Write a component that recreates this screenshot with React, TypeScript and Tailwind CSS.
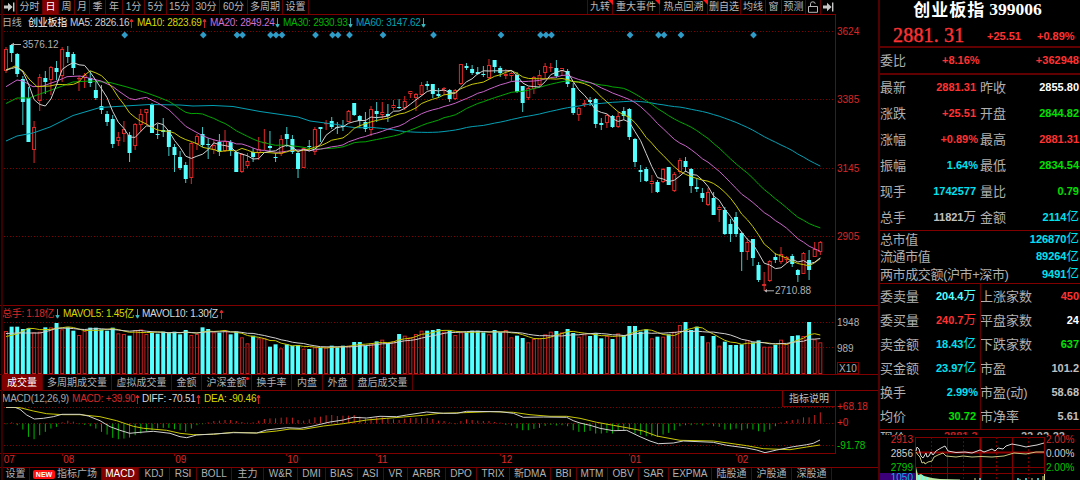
import clsx from "clsx";

type Point = [number, number];
// kind (r = up, c = down), high, body top, body bottom, low
type Candle = ["r" | "c", number, number, number, number];

const STEP = 5.616;
const candleX = (i: number) => 6 + i * STEP;

const candles: Candle[] = [
  ["r", 47, 49, 71, 73], ["c", 44, 45, 53, 62], ["c", 53, 54, 74, 77], ["c", 76, 79, 102, 125], ["c", 87, 98, 142, 142],
  ["r", 121, 127, 150, 163], ["r", 74, 77, 101, 111], ["c", 71, 78, 82, 94], ["r", 66, 67, 80, 95], ["c", 61, 68, 72, 80],
  ["r", 47, 49, 76, 82], ["c", 46, 52, 57, 63], ["c", 52, 54, 68, 75], ["r", 76, 78, 79, 91], ["r", 73, 75, 78, 88],
  ["c", 71, 78, 83, 87], ["c", 80, 90, 98, 100], ["c", 85, 106, 110, 114], ["c", 111, 114, 122, 126], ["c", 115, 119, 144, 148],
  ["r", 132, 137, 141, 146], ["r", 121, 129, 134, 142], ["c", 132, 135, 153, 162], ["r", 123, 124, 146, 150], ["r", 109, 114, 125, 132],
  ["r", 109, 109, 113, 125], ["c", 103, 105, 133, 133], ["c", 124, 134, 135, 139], ["c", 118, 130, 132, 137], ["c", 130, 130, 147, 156],
  ["c", 144, 147, 155, 172], ["c", 151, 157, 168, 170], ["c", 162, 165, 179, 183], ["r", 142, 143, 178, 184], ["r", 134, 136, 144, 150],
  ["c", 127, 134, 145, 147], ["c", 138, 144, 145, 159], ["r", 139, 145, 150, 154], ["c", 134, 142, 152, 156], ["r", 130, 141, 151, 152],
  ["c", 140, 142, 151, 156], ["c", 151, 152, 172, 172], ["r", 153, 154, 172, 173], ["r", 153, 161, 166, 168], ["c", 148, 152, 157, 162],
  ["r", 137, 149, 153, 160], ["r", 129, 142, 143, 150], ["c", 131, 146, 148, 152], ["c", 153, 157, 158, 162], ["r", 135, 139, 154, 156],
  ["c", 127, 134, 139, 147], ["c", 135, 139, 152, 154], ["c", 152, 153, 169, 178], ["r", 147, 148, 168, 168], ["c", 140, 146, 147, 150],
  ["r", 127, 129, 152, 155], ["c", 127, 127, 129, 142], ["r", 120, 123, 124, 130], ["c", 117, 121, 127, 129], ["c", 122, 127, 128, 134],
  ["c", 120, 126, 127, 131], ["r", 110, 111, 122, 122], ["c", 103, 103, 115, 116], ["c", 115, 116, 121, 128], ["c", 112, 122, 129, 132],
  ["r", 106, 109, 130, 136], ["c", 102, 111, 114, 122], ["r", 102, 112, 115, 119], ["c", 104, 114, 116, 122], ["r", 100, 105, 108, 110],
  ["c", 99, 107, 108, 109], ["r", 96, 101, 108, 110], ["r", 91, 91, 94, 98], ["r", 93, 94, 98, 111], ["r", 82, 85, 95, 96],
  ["c", 81, 84, 86, 90], ["c", 84, 84, 94, 98], ["c", 88, 94, 96, 98], ["r", 87, 88, 91, 95], ["c", 89, 90, 99, 102],
  ["r", 89, 90, 99, 100], ["r", 64, 64, 84, 85], ["c", 63, 66, 68, 70], ["c", 65, 69, 73, 75], ["c", 67, 72, 74, 75],
  ["c", 66, 74, 75, 77], ["r", 59, 65, 78, 79], ["c", 60, 60, 67, 73], ["c", 66, 68, 73, 77], ["r", 69, 74, 76, 79],
  ["r", 70, 73, 76, 81], ["c", 72, 75, 92, 93], ["c", 86, 86, 103, 112], ["r", 87, 88, 98, 100], ["r", 76, 77, 89, 94],
  ["r", 70, 75, 85, 87], ["r", 63, 66, 73, 79], ["r", 63, 67, 68, 72], ["c", 60, 68, 76, 78], ["r", 68, 68, 71, 76],
  ["c", 69, 71, 84, 87], ["c", 83, 88, 113, 115], ["r", 107, 108, 115, 121], ["r", 100, 103, 105, 107], ["c", 97, 100, 102, 106],
  ["c", 98, 99, 124, 128], ["c", 118, 123, 125, 130], ["r", 114, 115, 123, 128], ["c", 115, 116, 127, 128], ["r", 112, 116, 127, 128],
  ["c", 107, 111, 116, 120], ["c", 108, 109, 137, 140], ["c", 138, 139, 162, 167], ["c", 165, 170, 172, 182], ["c", 167, 169, 181, 182],
  ["r", 175, 181, 184, 193], ["c", 180, 182, 192, 193], ["r", 168, 169, 182, 183], ["c", 167, 167, 185, 185], ["r", 172, 174, 191, 192],
  ["r", 158, 160, 172, 174], ["c", 157, 161, 167, 172], ["c", 168, 169, 186, 193], ["c", 178, 187, 189, 192], ["c", 188, 193, 198, 202],
  ["r", 188, 192, 205, 206], ["c", 192, 198, 215, 215], ["r", 205, 207, 210, 222], ["c", 207, 210, 234, 235], ["c", 219, 224, 234, 242],
  ["c", 212, 217, 234, 237], ["c", 232, 233, 252, 271], ["r", 238, 242, 252, 260], ["c", 239, 239, 258, 266], ["c", 262, 265, 280, 282],
  ["r", 272, 284, 286, 291], ["r", 260, 261, 281, 282], ["c", 253, 257, 260, 263], ["r", 247, 254, 262, 264], ["r", 256, 257, 260, 263],
  ["c", 254, 256, 264, 267], ["c", 269, 270, 275, 282], ["r", 252, 253, 274, 274], ["c", 250, 260, 270, 280], ["r", 242, 249, 257, 257],
  ["r", 241, 242, 252, 255],
];

// bar tops, in thirds of a pixel below y = 300
const volumes = [
  93, 80, 80, 87, 85, 97, 95, 82, 82, 69, 88, 82, 92, 105, 93, 83, 83, 88, 92, 83, 100, 102, 107, 90, 88, 102, 98, 101, 95, 98,
  95, 103, 90, 105, 102, 82, 87, 97, 98, 92, 103, 95, 112, 130, 107, 115, 115, 140, 133, 145, 133, 137, 135, 146, 147, 142, 143, 142, 137, 142,
  137, 137, 126, 126, 137, 130, 124, 119, 130, 124, 102, 107, 112, 102, 92, 92, 90, 87, 95, 92, 105, 97, 97, 92, 92, 97, 103, 90, 97, 90,
  112, 107, 114, 127, 117, 115, 103, 95, 93, 97, 87, 99, 110, 103, 108, 100, 115, 108, 117, 100, 105, 78, 78, 95, 88, 115, 110, 110, 103, 95,
  75, 66, 90, 80, 108, 127, 108, 137, 125, 135, 135, 133, 120, 127, 121, 140, 140, 135, 119, 132, 108, 106, 108, 66, 118, 127,
];

// histogram ends, same unit, zero line at 370
const histogram = [
  371, 367, 375, 388, 410, 417, 405, 395, 385, 380, 367, 362, 365, 372, 374, 378, 385, 395, 403, 413, 417, 415, 412, 405, 400, 393, 390, 385, 383, 383,
  387, 390, 395, 385, 375, 371, 367, 363, 362, 360, 360, 363, 366, 368, 367, 362, 357, 355, 355, 353, 352, 353, 360, 362, 358, 352, 350, 346, 345, 348,
  347, 347, 345, 350, 355, 355, 352, 352, 355, 358, 360, 356, 354, 354, 354, 354, 357, 362, 363, 367, 372, 363, 358, 360, 362, 363, 363, 366, 368, 374,
  376, 384, 390, 390, 386, 383, 377, 374, 376, 375, 378, 390, 395, 395, 392, 400, 400, 398, 400, 390, 392, 388, 400, 404, 408, 408, 410, 403, 398, 390,
  378, 375, 375, 373, 376, 373, 378, 380, 388, 388, 385, 390, 385, 388, 393, 395, 388, 378, 367, 363, 360, 358, 352, 352, 345, 337,
];

const closes = candles.map(([kind, , top, bottom]) => (kind === "r" ? top : bottom));
const volumeTops = volumes.map((v) => 300 + v / 3);

// moving average; `head` covers the days before the window is full
function average(values: number[], size: number, head: Point[]): string {
  const points: Point[] = [...head];
  for (let i = size - 1; i < values.length; i++) {
    const sum = values.slice(i - size + 1, i + 1).reduce((a, b) => a + b, 0);
    points.push([candleX(i), sum / size]);
  }
  return toPoints(points);
}

function toPoints(points: Point[]): string {
  return points.map(([x, y]) => `${x.toFixed(1)},${y.toFixed(1)}`).join(" ");
}

const averages = [
  {
    color: "#00a0b4",
    points: average(closes, 60, [
      [6, 141], [17, 136], [33, 133], [50, 127], [73, 115.5], [100, 107.5], [133, 105.5], [150, 104.5], [180, 105],
      [193, 106], [213, 105.5], [233, 106.5], [260, 111.5], [298, 117], [310, 121], [333, 124],
    ]),
  },
  {
    color: "#00a800",
    points: average(closes, 30, [
      [6, 103.5], [17, 98], [29, 98], [40, 94], [57, 88], [73, 82], [90, 81], [110, 82.5], [127, 87], [147, 93], [158, 97],
    ]),
  },
  {
    color: "#c864c8",
    points: average(closes, 20, [
      [6, 86.7], [17, 80], [23, 81], [33, 86.7], [43, 86], [57, 81], [67, 76.7], [80, 76], [101, 81],
    ]),
  },
  {
    color: "#c8c800",
    points: average(closes, 10, [[6, 70], [11.6, 67.7], [15, 66], [23, 71], [29, 79], [37, 86.7], [50, 86]]),
  },
  { color: "#d0d0d0", points: average(closes, 5, [[6, 70], [11.6, 68.5], [17, 67], [23, 72]]) },
];

const diff: Point[] = [
  [6, 407.3], [15, 407.3], [20, 409.3], [26.7, 415], [34.3, 419], [43.3, 418.3], [53.3, 416.7], [62, 414.3], [80, 414.3],
  [88.3, 416], [100, 420.7], [110, 426.7], [120, 430.3], [129.7, 433.3], [140, 432.3], [153.3, 431.3], [170, 433.3],
  [180, 436.7], [186.7, 437.7], [196.7, 435], [213.3, 434], [233.3, 432.7], [256.7, 433], [266.7, 430], [286.7, 427.7],
  [300, 428.3], [310, 426.7], [330, 422], [343.3, 420], [353.3, 417.3], [366.7, 418], [380, 416.3], [396.7, 416.7],
  [406.7, 415], [426.7, 412], [443.3, 413.3], [456.7, 413.3], [466.7, 411.3], [500, 411.7], [513.3, 413.3], [523.3, 417.3],
  [543.3, 417], [566.7, 417.3], [573.3, 420.7], [580, 423], [590, 425.3], [600, 428.3], [613.3, 430.7], [626.7, 430.3],
  [640, 436.7], [650, 441], [658.3, 443.7], [673.3, 443], [683.3, 441], [713.3, 442.3], [726.7, 445.3], [746.7, 448],
  [756.7, 450], [765, 452.7], [776.7, 450], [793.3, 446.7], [806.7, 444.7], [813.3, 443.3], [820, 440],
];

const dea: Point[] = [
  [6, 407.3], [20, 407.7], [33.3, 411], [46.7, 413.7], [63.3, 414.7], [80, 414.7], [100, 416.7], [116.7, 420.7],
  [133.3, 426.3], [143.3, 428.3], [166.7, 430.3], [180, 433.3], [193.3, 434.7], [213.3, 434.3], [233.3, 432.3],
  [256.7, 433], [276.7, 431], [290, 429], [303.3, 429.3], [323.3, 426], [343.3, 423.7], [366.7, 420], [386.7, 418.3],
  [403.3, 417], [423.3, 415.3], [440, 413.3], [463.3, 412.7], [490, 411.7], [513.3, 412.3], [530, 414.7], [550, 416.3],
  [566.7, 416.3], [580, 418.3], [596.7, 422.3], [613.3, 425.3], [630, 428.3], [643.3, 431], [656.7, 436], [680, 440.3],
  [713.3, 441], [730, 443.3], [746.7, 445.7], [763.3, 448.7], [790, 449.7], [806.7, 447], [820, 445],
];

const signals = [124.7, 203.3, 237, 242.5, 270.5, 276, 282, 315.5, 332.5, 338, 349.5, 383, 433.5, 501, 540.5, 546, 551.5, 630, 658.5, 664, 681, 753.5];

const months = [
  { label: "07", x: 3 },
  { label: "08", x: 62.5 },
  { label: "09", x: 174.5 },
  { label: "10", x: 286.5 },
  { label: "11", x: 376.5 },
  { label: "12", x: 500.5 },
  { label: "01", x: 629.5 },
  { label: "02", x: 736.5 },
];

const periods = [
  { label: "分时", width: "w-[26px]" },
  { label: "日", width: "w-[16px]", active: true },
  { label: "周", width: "w-[16px]" },
  { label: "月", width: "w-[15px]" },
  { label: "季", width: "w-[16px]" },
  { label: "年", width: "w-[17px]" },
  { label: "1分", width: "w-[22px]" },
  { label: "5分", width: "w-[22px]" },
  { label: "15分", width: "w-[26px]" },
  { label: "30分", width: "w-[27px]" },
  { label: "60分", width: "w-[28px]" },
  { label: "多周期", width: "w-[35px]" },
  { label: "设置", width: "w-[26px]" },
];

const tools = [
  { label: "九转", width: "w-[25px]", hot: true },
  { label: "重大事件", width: "w-[47px]", hot: true },
  { label: "热点回溯", width: "w-[48px]", hot: true },
  { label: "删自选", width: "w-[33px]" },
  { label: "均线", width: "w-[25px]" },
  { label: "窗", width: "w-[16px]" },
  { label: "预测", width: "w-[24px]" },
];

const volumeTabs = [
  { label: "成交量", width: "w-[41px]", active: true },
  { label: "多周期成交量", width: "w-[69px]" },
  { label: "虚拟成交量", width: "w-[60px]" },
  { label: "金额", width: "w-[30px]" },
  { label: "沪深金额", width: "w-[50px]", dot: true },
  { label: "换手率", width: "w-[40px]" },
  { label: "内盘", width: "w-[31px]" },
  { label: "外盘", width: "w-[30px]" },
  { label: "盘后成交量", width: "w-[60px]" },
];

const indicatorTabs = [
  { label: "MACD", width: "w-[37px]", active: true },
  { label: "KDJ", width: "w-[31px]" },
  { label: "RSI", width: "w-[27px]" },
  { label: "BOLL", width: "w-[35px]" },
  { label: "主力", width: "w-[32px]" },
  { label: "W&R", width: "w-[34px]" },
  { label: "DMI", width: "w-[28px]" },
  { label: "BIAS", width: "w-[32px]" },
  { label: "ASI", width: "w-[26px]" },
  { label: "VR", width: "w-[24px]" },
  { label: "ARBR", width: "w-[38px]" },
  { label: "DPO", width: "w-[31px]" },
  { label: "TRIX", width: "w-[33px]" },
  { label: "新DMA", width: "w-[41px]" },
  { label: "BBI", width: "w-[26px]" },
  { label: "MTM", width: "w-[31px]" },
  { label: "OBV", width: "w-[31px]" },
  { label: "SAR", width: "w-[30px]" },
  { label: "EXPMA", width: "w-[43px]" },
  { label: "陆股通", width: "w-[40px]" },
  { label: "沪股通", width: "w-[40px]" },
  { label: "深股通", width: "w-[40px]" },
];

const RED = "text-[#ff3232]";
const GREEN = "text-[#00e000]";
const CYAN = "text-[#00e0f0]";
const WHITE = "text-white";
const GREY = "text-[#c0c0c0]";

type Cell = { label: string; value: string; unit?: string; color: string };

const quotes: [Cell, Cell][] = [
  [{ label: "最新", value: "2881.31", color: RED }, { label: "昨收", value: "2855.80", color: WHITE }],
  [{ label: "涨跌", value: "+25.51", color: RED }, { label: "开盘", value: "2844.82", color: GREEN }],
  [{ label: "涨幅", value: "+0.89%", color: RED }, { label: "最高", value: "2881.31", color: RED }],
  [{ label: "振幅", value: "1.64%", color: CYAN }, { label: "最低", value: "2834.54", color: GREEN }],
  [{ label: "现手", value: "1742577", color: CYAN }, { label: "量比", value: "0.79", color: GREEN }],
  [{ label: "总手", value: "11821", unit: "万", color: GREY }, { label: "金额", value: "2114", unit: "亿", color: CYAN }],
];

const totals: Cell[] = [
  { label: "总市值", value: "126870", unit: "亿", color: CYAN },
  { label: "流通市值", value: "89264", unit: "亿", color: CYAN },
  { label: "两市成交额(沪市+深市)", value: "9491", unit: "亿", color: CYAN },
];

const orders: [Cell, Cell][] = [
  [{ label: "委卖量", value: "204.4", unit: "万", color: "text-[#54ffff]" }, { label: "上涨家数", value: "450", color: RED }],
  [{ label: "委买量", value: "240.7", unit: "万", color: RED }, { label: "平盘家数", value: "24", color: WHITE }],
  [{ label: "卖金额", value: "18.43", unit: "亿", color: CYAN }, { label: "下跌家数", value: "637", color: GREEN }],
  [{ label: "买金额", value: "23.97", unit: "亿", color: CYAN }, { label: "市盈", value: "101.2", color: GREY }],
  [{ label: "换手", value: "2.99%", color: CYAN }, { label: "市盈(动)", value: "58.68", color: GREY }],
  [{ label: "均价", value: "30.72", color: GREEN }, { label: "市净率", value: "5.61", color: GREY }],
];

function Arrow({ down }: { down?: boolean }) {
  return (
    <svg width="5" height="10" viewBox="0 0 5 10" className="shrink-0">
      {down ? (
        <path d="M2.5 0V8M0.8 6.5L2.5 9.2L4.2 6.5Z" stroke="#3cb8c0" fill="#3cb8c0" strokeWidth="0.9" />
      ) : (
        <path d="M2.5 10V2M1 3.5L2.5 1L4 3.5Z" stroke="#d82828" fill="#d82828" strokeWidth="0.9" />
      )}
    </svg>
  );
}

function SkipIcon() {
  return (
    <svg width="11" height="10" viewBox="0 0 11 10">
      <path d="M0 3.5H4V0.8L8.6 5L4 9.2V6.5H0Z" fill="#c8c8c8" />
      <path d="M9.7 0.5V9.5" stroke="#c8c8c8" strokeWidth="1.4" />
    </svg>
  );
}

function Toolbar() {
  return (
    <div className="flex h-[15px] w-[836px] border-b border-[#800000] pl-[2px] text-[#b8b8b8]">
      <div className="flex w-[15px] items-center justify-center border-r border-[#600000]">
        <SkipIcon />
      </div>
      {periods.map((p) => (
        <div
          key={p.label}
          className={clsx(
            "flex items-center justify-center border-r border-[#600000]",
            p.width,
            p.active && "bg-[#800000] text-white",
          )}
        >
          {p.label}
        </div>
      ))}
      <div className="flex-1 border-r border-[#600000]" />
      {tools.map((t) => (
        <div key={t.label} className={clsx("relative flex items-center justify-center border-r border-[#600000]", t.width)}>
          {t.label}
          {t.hot && (
            <svg width="5" height="5" className="absolute -right-px top-0">
              <path d="M0 0H5V5Z" fill="#ff1414" />
            </svg>
          )}
        </div>
      ))}
      <div className="flex w-[15px] items-center justify-center border-r border-[#600000]">
        <svg width="10" height="12" viewBox="0 0 10 12" fill="none" stroke="#b8b8b8">
          <path d="M0.5 5.5H9.5V11.3H0.5ZM2.5 5.5V2.8Q2.5 0.8 4.8 0.8Q7.2 0.8 7.2 2.8" />
        </svg>
      </div>
      <div className="flex w-[15px] items-center justify-center">
        <SkipIcon />
      </div>
    </div>
  );
}

function GridLine({ y }: { y: number }) {
  return <line x1="4" x2="835" y1={y} y2={y} stroke="#800000" strokeDasharray="1 2" />;
}

function PriceChart() {
  return (
    <svg width="835" height="275" viewBox="0 30 835 275" className="block">
      {[31.5, 99.5, 168.5, 236.5].map((y) => (
        <GridLine key={y} y={y} />
      ))}
      {signals.map((x) => (
        <path key={x} d={`M${x} 31.6L${x + 3.4} 35L${x} 38.4L${x - 3.4} 35Z`} fill="#2f9cc8" />
      ))}
      {candles.map(([kind, high, top, bottom, low], i) => {
        const x = candleX(i);
        if (kind === "c") {
          return (
            <g key={i} fill="#54ffff">
              <rect x={x - 0.5} y={high} width="1" height={Math.max(low - high, 1)} opacity="0.8" />
              <rect x={x - 2} y={top} width="4" height={Math.max(bottom - top, 1)} />
            </g>
          );
        }
        return (
          <g key={i} stroke="#e02828" fill="none">
            <path d={`M${x} ${high}V${top}M${x} ${bottom}V${low}`} />
            <rect x={x - 1.5} y={top + 0.5} width="3" height={Math.max(bottom - top - 1, 0.2)} />
          </g>
        );
      })}
      {averages.map((a) => (
        <polyline key={a.color} points={a.points} fill="none" stroke={a.color} />
      ))}
      <g fill="#b0b0b0" stroke="none" fontSize="10">
        <path d="M12 44.5H21" stroke="#b0b0b0" />
        <path d="M11 44.5L14 42.8V46.2Z" />
        <text x="22.5" y="48">3576.12</text>
        <path d="M765 290.8H774" stroke="#b0b0b0" />
        <path d="M764 290.8L767 289V292.6Z" />
        <text x="775" y="294">2710.88</text>
      </g>
    </svg>
  );
}

function VolumeChart() {
  return (
    <svg width="835" height="54" viewBox="0 320 835 54" className="block">
      <GridLine y={322.5} />
      <GridLine y={347.5} />
      {volumeTops.map((y, i) => {
        const x = candleX(i);
        return candles[i][0] === "c" ? (
          <rect key={i} x={x - 2} y={y} width="4" height={374 - y} fill="#54ffff" />
        ) : (
          <rect key={i} x={x - 1.5} y={y + 0.5} width="3" height={373 - y} fill="none" stroke="#c82020" />
        );
      })}
      <polyline
        points={average(volumeTops, 5, [[6, 336.5], [17, 334]])}
        fill="none"
        stroke="#c8c800"
      />
      <polyline
        points={average(volumeTops, 10, [[6, 333.5], [17, 333], [40, 333], [50, 330.5]])}
        fill="none"
        stroke="#d0d0d0"
      />
    </svg>
  );
}

function MacdChart() {
  return (
    <svg width="835" height="46" viewBox="0 407 835 46" className="block">
      <GridLine y={407.5} />
      <GridLine y={423.5} />
      <GridLine y={445.5} />
      {histogram.map((v, i) => {
        const end = 300 + v / 3;
        const up = v < 370;
        return (
          <rect
            key={i}
            x={candleX(i) - 0.5}
            y={up ? end : 423.5}
            width="1"
            height={Math.max(Math.abs(end - 423.3), 0.7)}
            fill={up ? "#c82020" : "#00b400"}
          />
        );
      })}
      <polyline points={toPoints(dea)} fill="none" stroke="#c8c800" />
      <polyline points={toPoints(diff)} fill="none" stroke="#d0d0d0" />
    </svg>
  );
}

function MonthAxis() {
  return (
    <svg width="835" height="13" viewBox="0 454 835 13" className="block">
      {months.map((m) => (
        <g key={m.label}>
          <path d={`M${m.x} 454V456`} stroke="#800000" />
          <text x={m.x + 0.7} y="463.2" fontSize="10" fill="#d82828">
            {m.label}
          </text>
        </g>
      ))}
    </svg>
  );
}

function PriceSection() {
  return (
    <section className="flex h-[291px] border-b border-[#800000]">
      <div className="w-[836px] border-r border-[#800000]">
        <div className="flex h-[15px] items-center pl-[2px] pt-px tracking-[-0.25px]">
          <span className="w-[26px] text-[#b0b0b0]">日线</span>
          <span className="w-[42px] text-white">创业板指</span>
          <span className="flex w-[67px] items-center text-[#d0d0d0]">MA5: 2826.16<Arrow /></span>
          <span className="flex w-[73px] items-center text-[#d8d800]">MA10: 2823.69<Arrow /></span>
          <span className="flex w-[73px] items-center text-[#d070d0]">MA20: 2849.24<Arrow down /></span>
          <span className="flex w-[73px] items-center text-[#00b400]">MA30: 2930.93<Arrow down /></span>
          <span className="flex items-center text-[#00a0b4]">MA60: 3147.62<Arrow down /></span>
        </div>
        <PriceChart />
      </div>
      <div className="flex flex-col gap-[56.3px] pl-px pt-[11px] leading-3 text-[#d82828]">
        <span>3624</span>
        <span>3385</span>
        <span>3145</span>
        <span>2905</span>
      </div>
    </section>
  );
}

function VolumeSection() {
  return (
    <section className="flex h-[69px] border-b border-[#800000]">
      <div className="w-[836px] border-r border-[#800000]">
        <div className="flex h-[14px] items-center pl-[2px] pt-[2px] tracking-[-0.3px]">
          <span className="flex w-[61px] items-center gap-px text-[#d82828]">总手: 1.18亿<Arrow down /></span>
          <span className="flex w-[79px] items-center gap-px text-[#d8d800]">MAVOL5: 1.45亿<Arrow down /></span>
          <span className="flex items-center gap-px text-[#d8d8d8]">MAVOL10: 1.30亿<Arrow /></span>
        </div>
        <VolumeChart />
      </div>
      <div className="flex flex-col items-start pl-px pt-[11px] leading-3 text-[#b0b0b0]">
        <span>1948</span>
        <span className="mt-[14px]">989</span>
        <span className="mt-[7px] h-[12px] border border-[#800000] px-px leading-[11px]">X10</span>
      </div>
    </section>
  );
}

function MacdSection() {
  return (
    <section className="flex h-[63px]">
      <div className="w-[836px] border-b border-r border-[#800000]">
        <div className="flex h-[16px] items-center pl-[2px] tracking-[-0.2px]">
          <span className="w-[70px] text-[#a8a8a8]">MACD(12,26,9)</span>
          <span className="flex w-[70px] items-center text-[#d82828]">MACD: +39.90<Arrow /></span>
          <span className="flex w-[62px] items-center text-[#d8d8d8]">DIFF: -70.51<Arrow /></span>
          <span className="flex items-center text-[#d8d800]">DEA: -90.46<Arrow /></span>
          <span className="ml-auto flex h-[16px] w-[53px] items-center justify-center border-b border-l border-[#800000] tracking-normal text-[#c0c0c0]">
            指标说明
          </span>
        </div>
        <MacdChart />
      </div>
      <div className="flex flex-col pl-px pt-[10px] leading-3 text-[#d82828]">
        <span>+68.18</span>
        <span className="mt-[4px]">+0</span>
        <span className="mt-[11px] text-[#00c800]">-91.78</span>
      </div>
    </section>
  );
}

function IndicatorBar() {
  return (
    <div className="flex h-[13px] border-t border-[#800000] pl-[2px] text-[#b0b0b0]">
      <div className="flex w-[28px] items-center justify-center border-r border-[#600000]">设置</div>
      <div className="flex w-[72px] items-center justify-end gap-[2px] border-r border-[#600000] pr-[4px]">
        <span className="flex h-[9px] w-[22px] items-center justify-center rounded-[2px] bg-[#ff1010] text-[7px] font-bold text-white">
          NEW
        </span>
        指标广场
      </div>
      {indicatorTabs.map((t) => (
        <div
          key={t.label}
          className={clsx(
            "flex items-center justify-center border-r border-[#600000]",
            t.width,
            t.active && "bg-[#800000] text-white",
          )}
        >
          {t.label}
        </div>
      ))}
    </div>
  );
}

function Value({ cell }: { cell: Cell }) {
  return (
    <span className={clsx("flex items-center text-[11px] font-bold", cell.color)}>
      {cell.value}
      {cell.unit && <span className="text-[12.5px] font-normal">{cell.unit}</span>}
    </span>
  );
}

function Pair({ cells: [left, right] }: { cells: [Cell, Cell] }) {
  const percent = left.value.endsWith("%");
  return (
    <div className="flex flex-1 items-center">
      <div className={clsx("flex w-[100px] items-center justify-between", percent ? "pr-[2px]" : "pr-[4px]")}>
        <span>{left.label}</span>
        <Value cell={left} />
      </div>
      <div className="flex flex-1 items-center justify-between">
        <span>{right.label}</span>
        <Value cell={right} />
      </div>
    </div>
  );
}

function MiniChart() {
  return (
    <div className="flex h-[43px] text-[10px] leading-3">
      <div className="flex w-[35px] flex-col items-end">
        <span className="pr-[2px] leading-[5px] text-[#d82828]">2913</span>
        <span className="mt-[6px] pr-[2px] text-[#d0d0d0]">2856</span>
        <span className="mt-[2px] pr-[2px] leading-[11px] text-[#00c800]">2799</span>
        <span className="w-full bg-[#3c0078] pr-[2px] text-right leading-[10px] text-[#00b4e0]">1050</span>
      </div>
      <svg width="131" height="43" viewBox="915 437 131 43" className="block">
        <path d="M915.5 437V480M947.5 437V480M1012.5 437V480M1044.5 437V480M915 437.5H1045M915 467.5H1045M915 473.5H1045" stroke="#800000" fill="none" />
        <path d="M931.5 437V480M963.5 437V480M996.5 437V480M1028.5 437V480" stroke="#700000" strokeDasharray="2 2" />
        <path d="M980.5 437V480M915 452.5H1045" stroke="#900000" strokeWidth="2" />
        <path d="M916 480V467L918 475L921 474L924 476L928 477L932 478L940 479L960 479.5V480Z" fill="#b8e8a0" />
        <path d="M918 475V480M922 475V480M926 477V480M980 478V480M1018 478V480M1026 478V480M1038 478V480" stroke="#54ffff" strokeWidth="1.4" />
        <path d="M975 478V480M1020 479V480M1032 478V480M1043 476V480M1044.5 474V480" stroke="#d8d880" />
        <polyline
          points="916,452 918,455 920,457 922,463 924,462 925,464 928,462 932,461 934,457 938,455 943,453 946,456 956,457 963,456 972,457 981,456.5 992,457 1004,456 1014,453 1026,454 1036,452 1044,452"
          fill="none"
          stroke="#c8c880"
        />
        <polyline
          points="916,451 917,447 919,449 921,456 923,458 926,453 927,457 929,456 931,452 933,455 936,451 941,448 945,446 948,451 956,452.5 965,452 972,453 980,450 984,452 992,449 995,451 998,448 1003,449 1006,446 1012,444 1020,445.5 1026,447 1031,446 1037,445 1044,443"
          fill="none"
          stroke="#d8d8d8"
        />
      </svg>
      <div className="flex flex-col">
        <span className="leading-[5px] text-[#d82828]">2.00%</span>
        <span className="mt-[6px] text-[#d0d0d0]">0.00%</span>
        <span className="mt-[2px] text-[#00c800]">2.00%</span>
      </div>
    </div>
  );
}

function QuotePanel() {
  return (
    <aside className="flex h-[480px] w-[202px] flex-col border-l-2 border-[#500000] text-[13px] leading-none text-[#b0b0b0]">
      <h1 className="flex h-[20px] items-center justify-center gap-[4px] pr-[5px] font-['Liberation_Serif','Noto_Sans_CJK_SC',serif] text-[17px] font-bold text-white">
        <span className="tracking-[1px]">创业板指</span>
        <span className="text-[17.5px]">399006</span>
      </h1>
      <div className="flex h-[28px] items-center border-b-2 border-[#600000] pl-[13px] text-[11px] font-bold text-[#ff3232]">
        <span className="flex w-[94px] pt-[3px] font-['Liberation_Serif',serif] text-[20px] font-normal [-webkit-text-stroke:0.4px_#ff3232]">
          {"2881.31".split("").map((char, i) => (
            <span key={i} className="w-[10.2px]">{char}</span>
          ))}
        </span>
        <span className="w-[50px] pt-[7px]">+25.51</span>
        <span className="pt-[7px]">+0.89%</span>
      </div>
      <div className="flex h-[27px] items-center border-b-2 border-[#600000] pr-px">
        <span className="w-[62px]">委比</span>
        <Value cell={{ label: "", value: "+8.16%", color: RED }} />
        <span className="ml-auto">
          <Value cell={{ label: "", value: "+362948", color: RED }} />
        </span>
      </div>
      <div className="flex h-[156px] flex-col border-b border-[#800000] pr-px">
        {quotes.map((cells) => (
          <Pair key={cells[0].label} cells={cells} />
        ))}
      </div>
      <div className="flex h-[53px] flex-col border-b border-[#800000] pr-px">
        {totals.map((cell) => (
          <div key={cell.label} className="flex flex-1 items-center justify-between">
            <span className="tracking-[-0.4px]">{cell.label}</span>
            <Value cell={cell} />
          </div>
        ))}
      </div>
      <div className="relative flex h-[146px] flex-col border-b border-[#800000] pr-px">
        <div className="absolute left-[100px] top-0 h-full w-px bg-[#600000]" />
        {orders.map((cells) => (
          <Pair key={cells[0].label} cells={cells} />
        ))}
      </div>
      {/* next row of the list, mostly scrolled under the mini chart */}
      <div className="mb-[2px] flex h-[5px] items-start overflow-hidden pr-px pt-[1px] text-[13px]">
        <span className="w-[64px]">现价</span>
        <span className="text-[11px] font-bold text-[#c02020]">2881.3</span>
        <span className="ml-auto pr-[14px] text-[11px] font-bold">22-02-22</span>
      </div>
      <MiniChart />
    </aside>
  );
}

export default function App() {
  return (
    <main className="flex h-[480px] w-[1080px] overflow-hidden whitespace-nowrap bg-black font-['Liberation_Sans','Noto_Sans_CJK_SC',sans-serif] text-[10px] leading-none">
      <div className="relative flex w-[878px] flex-col">
        <div className="absolute left-[1px] top-0 h-full w-[2px] bg-[#380000]" />
        <Toolbar />
        <PriceSection />
        <VolumeSection />
        <div className="flex h-[16px] border-b border-[#800000] pl-[2px] text-[#b0b0b0]">
          {volumeTabs.map((t) => (
            <div
              key={t.label}
              className={clsx(
                "relative flex items-center justify-center border-r border-[#600000]",
                t.width,
                t.active && "bg-[#800000] text-white",
              )}
            >
              {t.label}
              {t.dot && <i className="absolute right-[2px] top-[2px] size-[3px] rounded-full bg-[#ff1010]" />}
            </div>
          ))}
        </div>
        <MacdSection />
        <MonthAxis />
        <IndicatorBar />
      </div>
      <QuotePanel />
    </main>
  );
}
